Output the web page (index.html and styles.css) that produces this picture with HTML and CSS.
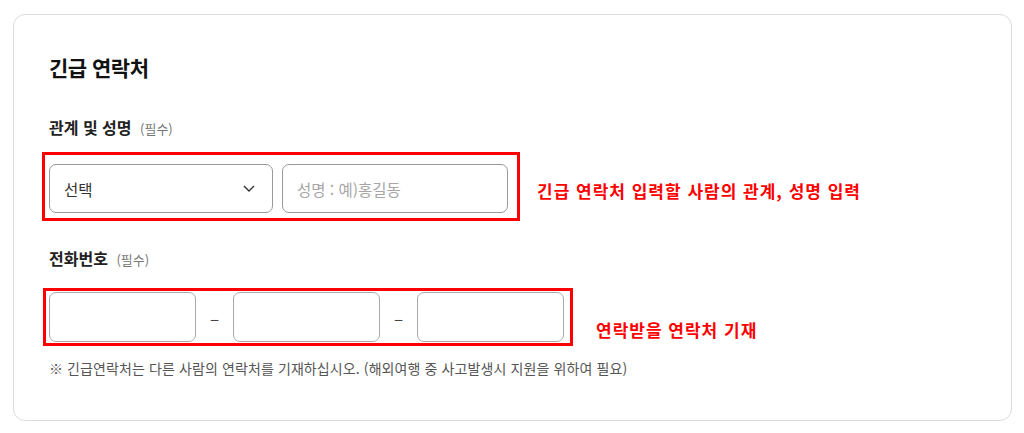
FILE: index.html
```html
<!DOCTYPE html>
<html lang="ko">
<head>
    <meta charset="UTF-8">
    <meta name="viewport" content="width=device-width, initial-scale=1.0">
    <title>긴급 연락처</title>
    <link rel="stylesheet" href="styles.css">
</head>
<body>
    <section class="card">
        <h2 class="card-title">긴급 연락처</h2>

        <div class="field">
            <div class="field-label">관계 및 성명 <span class="req">(필수)</span></div>
            <div class="field-row">
                <div class="mark mark-name">
                    <div class="select">
                        <span>선택</span>
                        <svg class="chevron" width="12" height="7" viewBox="0 0 12 7">
                            <path d="M1 1l5 5 5-5" fill="none" stroke="#333" stroke-width="1.4"/>
                        </svg>
                    </div>
                    <input type="text" class="text-input name-input" placeholder="성명 : 예)홍길동">
                </div>
                <p class="hint hint-name">긴급 연락처 입력할 사람의 관계, 성명 입력</p>
            </div>
        </div>

        <div class="field field-phone">
            <div class="field-label">전화번호 <span class="req">(필수)</span></div>
            <div class="field-row">
                <div class="mark mark-phone">
                    <input type="text" class="text-input phone-input">
                    <span class="dash">–</span>
                    <input type="text" class="text-input phone-input">
                    <span class="dash">–</span>
                    <input type="text" class="text-input phone-input">
                </div>
                <p class="hint hint-phone">연락받을 연락처 기재</p>
            </div>
        </div>

        <p class="note">※ 긴급연락처는 다른 사람의 연락처를 기재하십시오. (해외여행 중 사고발생시 지원을 위하여 필요)</p>
    </section>
</body>
</html>
```

FILE: styles.css
```css
body {
    margin: 0;
    padding: 14px 12px 0 13px;
    background-color: #fff;
    font-family: "Noto Sans CJK KR", "Noto Sans", sans-serif;
    color: #222;
}

.card {
    height: 407px;
    box-sizing: border-box;
    padding: 38px 35px 0 35px;
    border: 1px solid #dcdcdc;
    border-radius: 12px;
}

.card-title {
    margin: 0 0 36px;
    font-size: 21px;
    line-height: 28px;
    font-weight: 700;
    letter-spacing: -0.5px;
    color: #111;
}

.field-label {
    margin-bottom: 13px;
    font-size: 16px;
    line-height: 20px;
    font-weight: 700;
    color: #222;
}

.req {
    margin-left: 4px;
    font-size: 13px;
    font-weight: 400;
    color: #777;
}

.field-phone {
    margin-top: 27px;
}

.field-phone .field-label {
    margin-bottom: 18px;
}

.field-row {
    display: flex;
    align-items: flex-start;
}

.mark {
    display: flex;
    align-items: center;
    border: 3px solid #ff0000;
}

.mark-name {
    margin-left: -7px;
    padding: 9px 9px 5px 4px;
    gap: 9px;
}

.mark-phone {
    margin-left: -6px;
    padding: 1px 6px 1px 3px;
}

.select {
    display: flex;
    align-items: center;
    justify-content: space-between;
    width: 224px;
    height: 49px;
    box-sizing: border-box;
    padding: 0 17px 0 14px;
    border: 1px solid #999;
    border-radius: 7px;
    font-size: 15.5px;
    color: #333;
}

.text-input {
    box-sizing: border-box;
    margin: 0;
    border: 1px solid #aaa;
    border-radius: 7px;
    background: #fff;
    font-family: inherit;
    font-size: 15.5px;
    color: #333;
    outline: none;
}

.text-input::placeholder {
    color: #a6a6a6;
}

.name-input {
    width: 226px;
    height: 49px;
    padding: 0 14px;
    border-color: #999;
}

.phone-input {
    width: 147px;
    height: 50px;
    padding: 0 12px;
}

.dash {
    width: 37px;
    text-align: center;
    font-size: 17px;
    color: #444;
}

.hint {
    margin: 0;
    font-size: 17px;
    line-height: 22px;
    font-weight: 700;
    letter-spacing: 1px;
    color: #ff0000;
}

.hint-name {
    margin: 28px 0 0 17px;
}

.hint-phone {
    margin: 31px 0 0 23px;
}

.note {
    margin: 12px 0 0;
    font-size: 14px;
    line-height: 20px;
    letter-spacing: 0.1px;
    color: #555;
}
```
